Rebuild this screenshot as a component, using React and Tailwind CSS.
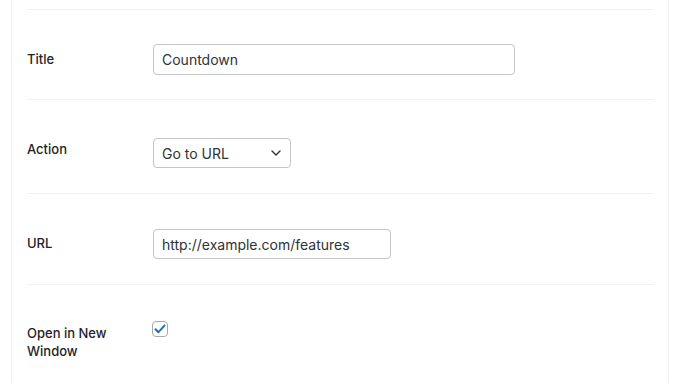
export default function App() {
  const font = { fontFamily: "Inter, 'Noto Sans', sans-serif" };
  return (
    <div className="w-[680px] h-[385px] bg-white overflow-hidden pl-[11px]" style={font}>
      <div className="w-[658px] h-[383px] border-x border-[#f0f0f1] pl-[15px] pr-[14px]">
        <div className="h-[9px]" />
        {/* Title */}
        <div className="flex items-start border-t border-[#f0f0f1] pt-[34px] pb-[24px]">
          <div className="w-[126px] pr-[10px] mt-[6px] text-[13px] leading-[18px] font-medium text-[#1d2327]">Title</div>
          <div className="w-[362px] h-[31px] border border-[#c3c4c7] rounded-[4px] px-[8px] flex items-center text-[14px] text-[#2c3338]">
            Countdown
          </div>
        </div>
        {/* Action */}
        <div className="flex items-start border-t border-[#f0f0f1] pt-[38px] pb-[25px]">
          <div className="w-[126px] pr-[10px] mt-[2px] text-[13px] leading-[18px] font-medium text-[#1d2327]">Action</div>
          <div className="w-[138px] h-[30px] border border-[#c3c4c7] rounded-[4px] pl-[8px] pr-[8px] flex items-center justify-between text-[14px] text-[#2c3338]">
            <span>Go to URL</span>
            <svg width="10" height="6" viewBox="0 0 10 6" fill="none" className="mr-[1px]">
              <path d="M1 1l4 4 4-4" stroke="#2c3338" strokeWidth="1.4" strokeLinecap="round" strokeLinejoin="round" />
            </svg>
          </div>
        </div>
        {/* URL */}
        <div className="flex items-start border-t border-[#f0f0f1] pt-[35px] pb-[25px]">
          <div className="w-[126px] pr-[10px] mt-[5px] text-[13px] leading-[18px] font-medium text-[#1d2327]">URL</div>
          <div className="w-[238px] h-[30px] border border-[#c3c4c7] rounded-[4px] px-[8px] flex items-center text-[14px] text-[#2c3338]">
            http://example.com/features
          </div>
        </div>
        {/* Open in New Window */}
        <div className="flex items-start border-t border-[#f0f0f1] pt-[36px]">
          <div className="w-[126px] pr-[10px] mt-[3px] text-[13px] leading-[18px] font-medium text-[#1d2327]">Open in New Window</div>
          <div className="w-[16px] h-[16px] -ml-[1px] border border-[#a7aaad] rounded-[4px] flex items-center justify-center">
            <svg width="12" height="10" viewBox="0 0 12 10" fill="none">
              <path d="M1.5 5.2l3 3 6-6.6" stroke="#2271b1" strokeWidth="2" strokeLinecap="round" strokeLinejoin="round" />
            </svg>
          </div>
        </div>
      </div>
    </div>
  );
}
